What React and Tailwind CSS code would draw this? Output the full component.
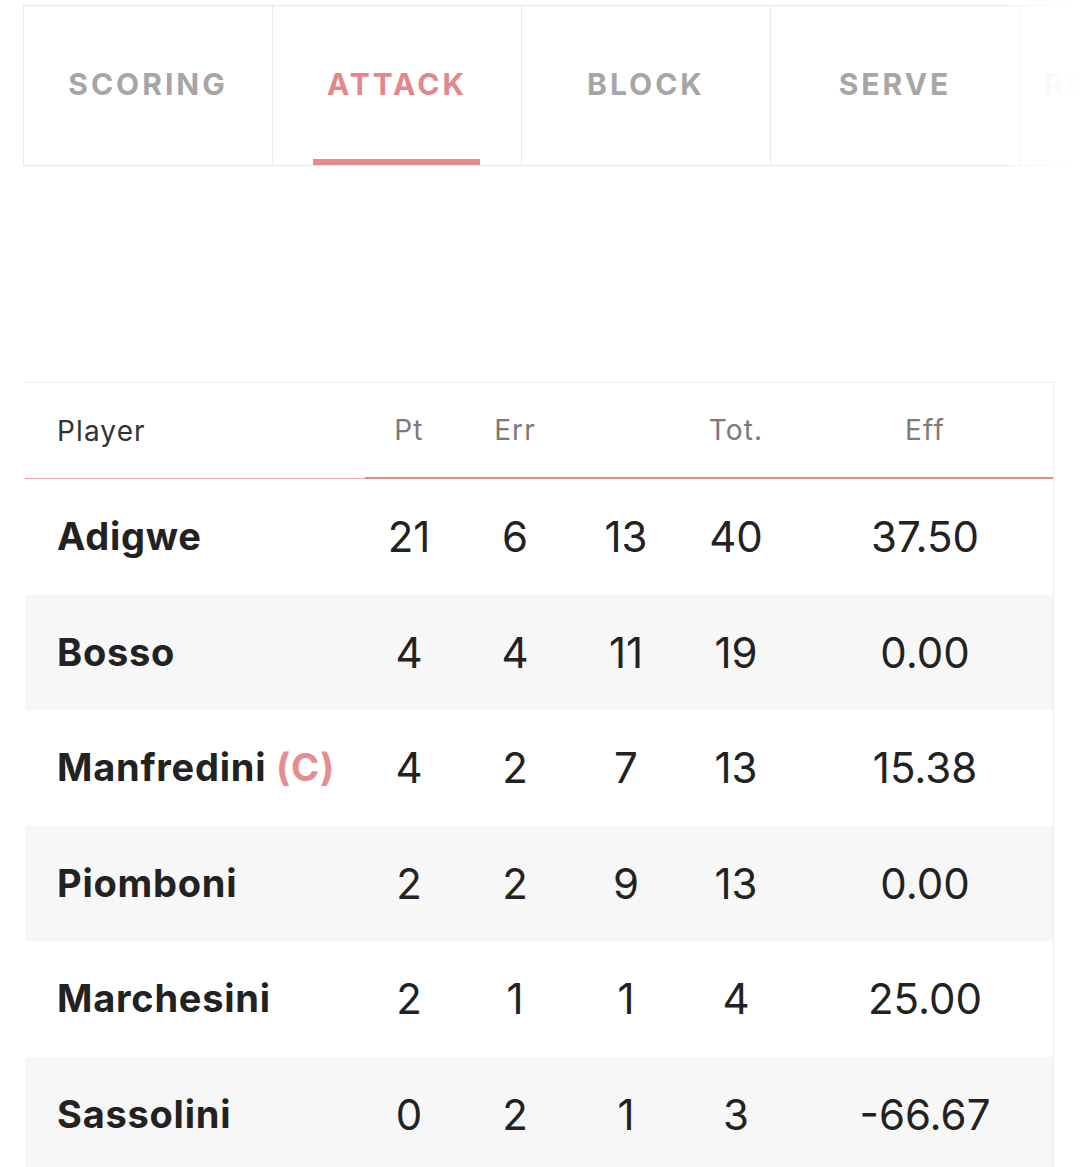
import React from 'react';

const tabs = ['SCORING', 'ATTACK', 'BLOCK', 'SERVE', 'RECEPTION'];

const rows = [
  { name: 'Adigwe', pt: 21, err: 6, x: 13, tot: 40, eff: '37.50' },
  { name: 'Bosso', pt: 4, err: 4, x: 11, tot: 19, eff: '0.00' },
  { name: 'Manfredini', captain: true, pt: 4, err: 2, x: 7, tot: 13, eff: '15.38' },
  { name: 'Piomboni', pt: 2, err: 2, x: 9, tot: 13, eff: '0.00' },
  { name: 'Marchesini', pt: 2, err: 1, x: 1, tot: 4, eff: '25.00' },
  { name: 'Sassolini', pt: 0, err: 2, x: 1, tot: 3, eff: '-66.67' },
];

export default function App() {
  return (
    <div className="w-[1080px] h-[1167px] overflow-hidden bg-white font-['Inter',sans-serif]">
      {/* Tabs */}
      <div className="relative pt-[5px] pl-[23px]">
        <div className="flex w-max border-t border-[#e9e9e9]">
          {tabs.map((t, i) => (
            <div
              key={t}
              className={`relative w-[249px] h-[160px] flex items-center justify-center border-l border-b border-[#e9e9e9] ${i === 4 ? 'text-[#e6e6e6]' : i === 1 ? 'text-[#e4878c]' : 'text-[#a6a6a6]'}`}
            >
              <span className="text-[30px] font-bold tracking-[0.1em] -mt-[2px]">{t}</span>
              {i === 1 && (
                <div className="absolute bottom-0 left-[40px] w-[167px] h-[6px] bg-[#e48a8e]"></div>
              )}
            </div>
          ))}
        </div>
        <div className="absolute right-0 top-0 h-[215px] w-[70px] bg-gradient-to-r from-white/40 to-white"></div>
      </div>

      {/* Table */}
      <div className="mt-[216px] ml-[25px] w-[1029px] border-t border-r border-[#ececec]">
        <div className="flex h-[96px] items-center text-[28px] tracking-[0.04em] text-[#7a7a7a]">
          <div className="w-[340px] h-full flex items-center pl-[32px] text-[#333] border-b border-[#e8a9ab]">Player</div>
          <div className="flex flex-1 h-full items-center border-b-2 border-[#e48a8e]">
            <div className="w-[88px] text-center">Pt</div>
            <div className="w-[124px] text-center">Err</div>
            <div className="w-[98px] text-center"></div>
            <div className="w-[122px] text-center">Tot.</div>
            <div className="flex-1 text-center">Eff</div>
          </div>
        </div>
        {rows.map((r, i) => (
          <div
            key={r.name}
            className={`flex h-[115.5px] items-center text-[#222] ${i % 2 === 1 ? 'bg-[#f7f7f7]' : 'bg-white'}`}
          >
            <div className="w-[340px] pl-[32px] text-[38px] font-bold tracking-[0.02em]">
              {r.name}
              {r.captain && <span className="text-[#e68d91]"> (C)</span>}
            </div>
            <div className="flex flex-1 items-center text-[42px] font-normal">
              <div className="w-[88px] text-center">{r.pt}</div>
              <div className="w-[124px] text-center">{r.err}</div>
              <div className="w-[98px] text-center">{r.x}</div>
              <div className="w-[122px] text-center">{r.tot}</div>
              <div className="flex-1 text-center">{r.eff}</div>
            </div>
          </div>
        ))}
      </div>
    </div>
  );
}
